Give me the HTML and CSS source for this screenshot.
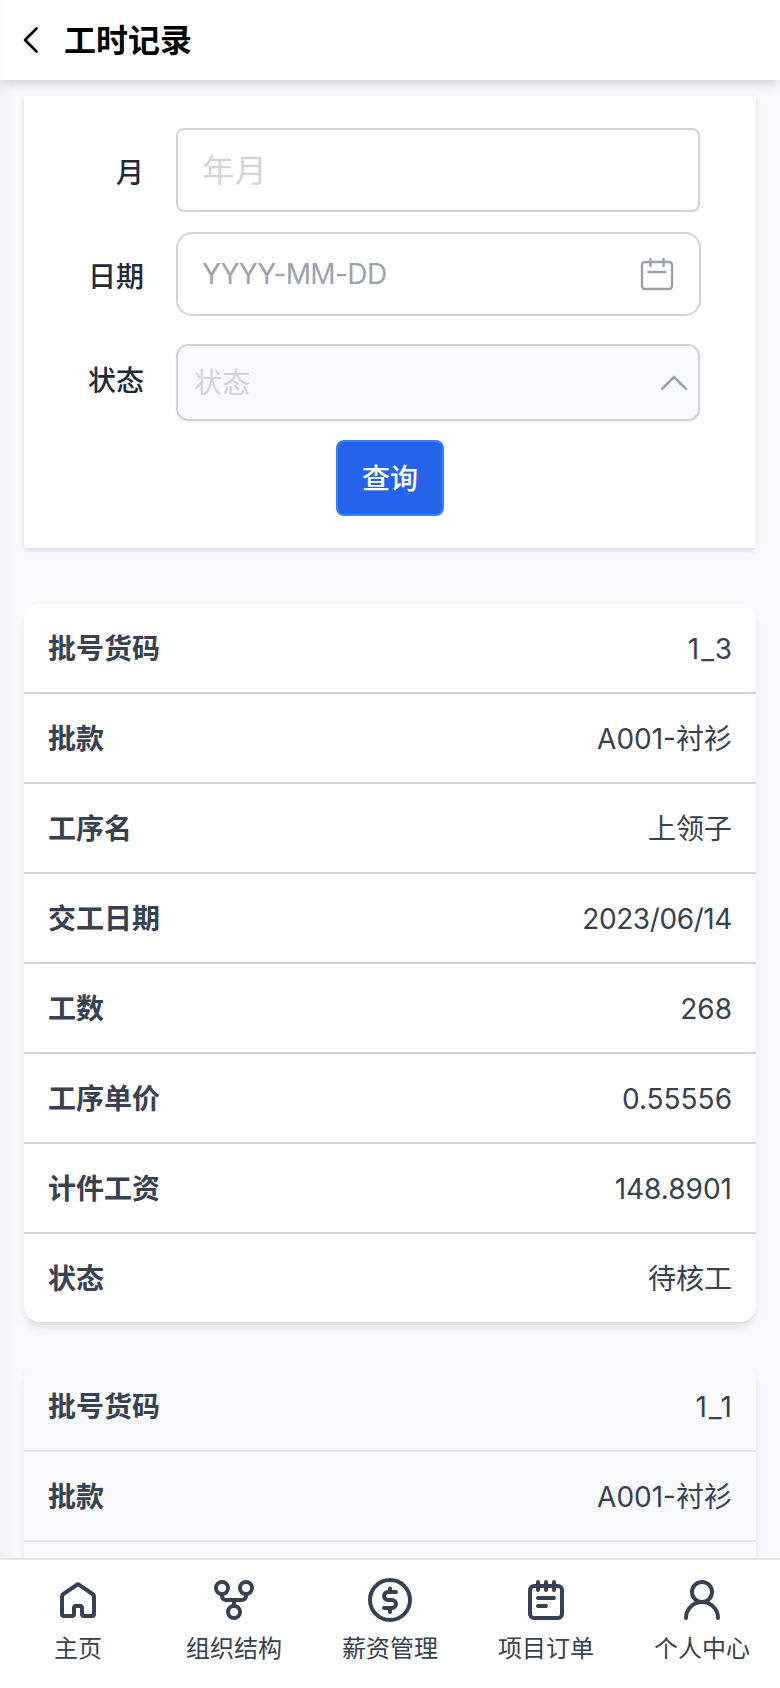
FILE: index.html
```
<!DOCTYPE html>
<html lang="zh-CN">
<head>
  <meta charset="UTF-8">
  <meta name="viewport" content="width=device-width, initial-scale=1.0">
  <title>工时记录</title>
  <link rel="stylesheet" href="styles.css">
</head>
<body>
  <div class="app">
    <header class="header">
      <svg class="back" viewBox="0 0 24 32"><path d="M18.500 4.500 7 16l11.500 11.500"/></svg>
      <h1>工时记录</h1>
    </header>

    <main class="content">
      <form class="search">
        <div class="field">
          <label for="month">月</label>
          <input class="month" type="text" id="month" placeholder="年月">
        </div>
        <div class="field">
          <label for="date">日期</label>
          <div class="date">
            <input type="text" id="date" placeholder="YYYY-MM-DD">
            <svg class="calendar" viewBox="0 0 40 40"><rect x="5" y="8" width="30" height="27" rx="3"/><path d="M13.500 5v7M26.500 5v7M11.500 18h17"/></svg>
          </div>
        </div>
        <div class="field">
          <label>状态</label>
          <div class="select">
            <span>状态</span>
            <svg class="arrow" viewBox="0 0 32 32"><path d="M4 22 16 10l12 12"/></svg>
          </div>
        </div>
        <button type="button">查询</button>
      </form>

      <dl class="record">
        <div class="row"><dt>批号货码</dt><dd class="code">1_3</dd></div>
        <div class="row"><dt>批款</dt><dd>A001-衬衫</dd></div>
        <div class="row"><dt>工序名</dt><dd>上领子</dd></div>
        <div class="row"><dt>交工日期</dt><dd class="day">2023/06/14</dd></div>
        <div class="row"><dt>工数</dt><dd>268</dd></div>
        <div class="row"><dt>工序单价</dt><dd>0.55556</dd></div>
        <div class="row"><dt>计件工资</dt><dd>148.8901</dd></div>
        <div class="row"><dt>状态</dt><dd>待核工</dd></div>
      </dl>

      <dl class="record gray">
        <div class="row"><dt>批号货码</dt><dd class="code">1_1</dd></div>
        <div class="row"><dt>批款</dt><dd>A001-衬衫</dd></div>
        <div class="row"></div>
      </dl>
    </main>

    <nav class="tabs">
      <a class="tab">
        <svg viewBox="0 0 24 24"><path d="M5 20h4a1 1 0 0 0 1-1v-3a1 1 0 0 1 1-1h2a1 1 0 0 1 1 1v3a1 1 0 0 0 1 1h4a1 1 0 0 0 1-1v-8.700a1.500 1.500 0 0 0-.7-1.300l-6.700-4.600a1 1 0 0 0-1.200 0L4.700 9A1.500 1.500 0 0 0 4 10.300V19a1 1 0 0 0 1 1z"/></svg>
        <span>主页</span>
      </a>
      <a class="tab">
        <svg viewBox="0 0 24 24"><circle cx="12" cy="18" r="3"/><circle cx="6" cy="6" r="3"/><circle cx="18" cy="6" r="3"/><path d="M18 9v1a2 2 0 0 1-2 2H8a2 2 0 0 1-2-2V9M12 12v3"/></svg>
        <span>组织结构</span>
      </a>
      <a class="tab">
        <svg viewBox="0 0 24 24"><circle cx="12" cy="12" r="10"/><path d="M15 8h-4a2 2 0 0 0 0 4h2a2 2 0 0 1 0 4H9M12 6.200V8M12 16v2"/></svg>
        <span>薪资管理</span>
      </a>
      <a class="tab">
        <svg viewBox="0 0 24 24"><rect x="4" y="5" width="16" height="16" rx="2"/><path d="M8 3v4M12 3v4M16 3v4M8 11h8M8 15h4"/></svg>
        <span>项目订单</span>
      </a>
      <a class="tab">
        <svg viewBox="0 0 24 24"><circle cx="12" cy="8" r="5"/><path d="M20 21a8 8 0 0 0-16 0"/></svg>
        <span>个人中心</span>
      </a>
    </nav>
  </div>
</body>
</html>
```
FILE: styles.css
```
* {
  box-sizing: border-box;
}
body {
  margin: 0;
  font-family: Inter, "Noto Sans CJK SC", sans-serif;
  font-size: 28px;
  line-height: 40px;
  color: #374151;
}
svg {
  fill: none;
  stroke: currentColor;
  stroke-width: 2;
  stroke-linecap: round;
  stroke-linejoin: round;
}
.app {
  display: flex;
  flex-direction: column;
  height: 1688px;
  overflow: hidden;
}

/* header */
.header {
  display: flex;
  align-items: center;
  flex: none;
  height: 80px;
  padding-left: 18px;
  background: linear-gradient(to right, #f9fafb, #fff 5px);
  color: #000;
  box-shadow: 0 8px 12px -2px rgba(0, 0, 0, 0.1), 0 4px 8px -4px rgba(0, 0, 0, 0.1);
  z-index: 1;
}
.back {
  width: 24px;
  height: 32px;
  margin-right: 22px;
  stroke-width: 2.6;
}
h1 {
  margin: 0;
  padding-top: 2px;
  font-size: 32px;
  font-weight: 600;
}

.content {
  flex: 1;
  min-height: 0;
  overflow: hidden;
  padding: 16px 24px 0;
  background: linear-gradient(to right, #f2f3f4, #f9fafc 16px);
}

/* search form */
.search {
  height: 452px;
  padding: 32px 56px 32px 0;
  background: #fff;
  box-shadow: 0 2px 6px rgba(0, 0, 0, 0.1), 0 2px 4px -2px rgba(0, 0, 0, 0.1);
}
.field {
  display: flex;
  align-items: flex-start;
  gap: 32px;
  height: 104px;
}
label {
  flex: none;
  width: 120px;
  padding-top: 25px;
  text-align: right;
  font-weight: 500;
  color: #1f2937;
}
input {
  flex: 1;
  min-width: 0;
  padding: 0;
  border: none;
  outline: none;
  background: none;
  font: inherit;
}
.month, .date {
  flex: 1;
  height: 84px;
  padding: 0 24px;
  border: 2px solid #d1d5db;
}
.month {
  border-radius: 8px;
  font-size: 32px;
  letter-spacing: 0.8px;
}
.month::placeholder {
  color: #d1d5db;
}
.date {
  display: flex;
  align-items: center;
  border-radius: 16px;
}
.date input {
  letter-spacing: -0.6px;
}
.date input::placeholder {
  color: #9ca3af;
}
.calendar {
  width: 40px;
  height: 40px;
  margin-right: -2px;
  color: #9ca3af;
  stroke-width: 2.4;
}
.select {
  display: flex;
  align-items: center;
  justify-content: space-between;
  flex: 1;
  height: 77px;
  margin-top: 8px;
  padding: 0 8px 0 16px;
  border: 2px solid #d1d5db;
  border-radius: 12px;
  background: #f9fafc;
  color: #d1d5db;
  box-shadow: 0 2px 4px rgba(0, 0, 0, 0.05);
}
.arrow {
  width: 32px;
  height: 32px;
  color: #9ca3af;
  stroke-width: 2.5;
}
button {
  display: block;
  width: 108px;
  height: 76px;
  margin: 0 0 0 312px;
  padding: 2px 0 0;
  border: 2px solid #3b82f6;
  border-radius: 8px;
  background: #2563eb;
  color: #fff;
  font: inherit;
  font-weight: 500;
}

/* records */
.record {
  margin: 56px 0 0;
  border-radius: 16px;
  background: #fff;
  box-shadow: 0 8px 12px -2px rgba(0, 0, 0, 0.08), 0 4px 8px -4px rgba(0, 0, 0, 0.1);
}
.record.gray {
  margin-top: 40px;
  background: #f9fafc;
}
.row {
  display: flex;
  align-items: center;
  justify-content: space-between;
  height: 90px;
  padding: 2px 24px 0;
  border-bottom: 2px solid #d1d5db;
}
.gray .row {
  border-color: #e5e7eb;
}
.row:last-child {
  height: 88px;
  border-bottom: none;
}
dt {
  font-weight: 600;
}
dd {
  margin: 0;
}
.code {
  margin-right: -2px;
  letter-spacing: 2px;
}
.day {
  letter-spacing: -0.4px;
}

/* bottom tabs */
.tabs {
  display: flex;
  flex: none;
  height: 130px;
  padding-top: 16px;
  border-top: 2px solid #e5e7eb;
  background: #fff;
}
.tab {
  display: flex;
  flex-direction: column;
  align-items: center;
  flex: 1;
  gap: 9px;
  font-size: 24px;
  line-height: 32px;
}
.tab svg {
  width: 48px;
  height: 48px;
}
```
